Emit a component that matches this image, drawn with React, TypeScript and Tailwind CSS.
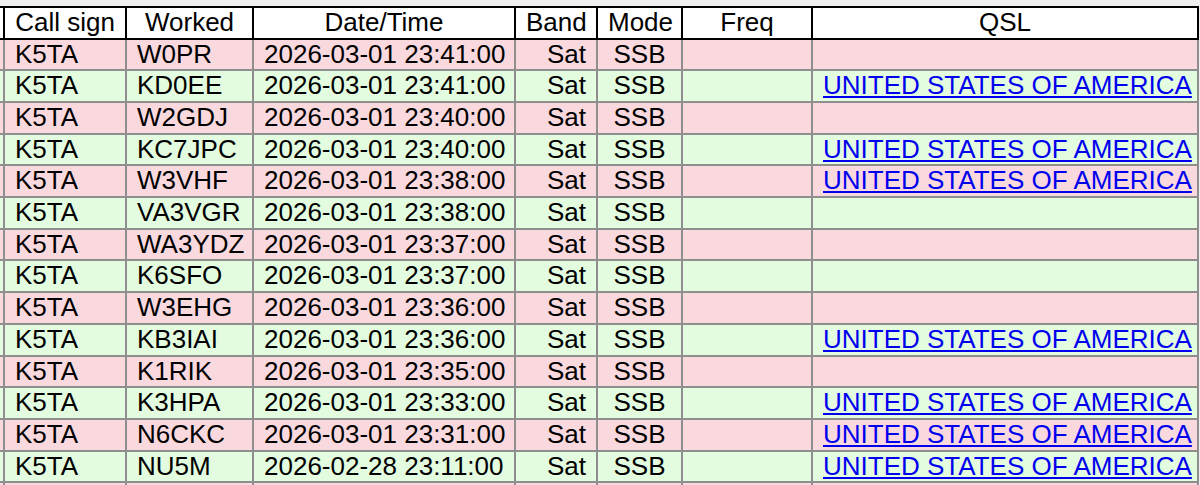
const rows: [string, string, string, boolean][] = [
  ['K5TA', 'W0PR', '2026-03-01 23:41:00', false],
  ['K5TA', 'KD0EE', '2026-03-01 23:41:00', true],
  ['K5TA', 'W2GDJ', '2026-03-01 23:40:00', false],
  ['K5TA', 'KC7JPC', '2026-03-01 23:40:00', true],
  ['K5TA', 'W3VHF', '2026-03-01 23:38:00', true],
  ['K5TA', 'VA3VGR', '2026-03-01 23:38:00', false],
  ['K5TA', 'WA3YDZ', '2026-03-01 23:37:00', false],
  ['K5TA', 'K6SFO', '2026-03-01 23:37:00', false],
  ['K5TA', 'W3EHG', '2026-03-01 23:36:00', false],
  ['K5TA', 'KB3IAI', '2026-03-01 23:36:00', true],
  ['K5TA', 'K1RIK', '2026-03-01 23:35:00', false],
  ['K5TA', 'K3HPA', '2026-03-01 23:33:00', true],
  ['K5TA', 'N6CKC', '2026-03-01 23:31:00', true],
  ['K5TA', 'NU5M', '2026-02-28 23:11:00', true],
];

const th = 'border-2 border-black bg-white px-[10px] py-0 text-center font-normal leading-[29.5px] whitespace-nowrap';
const td = 'border-2 border-[#8e8e8e] px-[10px] py-0 leading-[29.7px] whitespace-nowrap';

export default function App() {
  return (
    <div
      className="h-[485px] w-[1200px] overflow-hidden bg-[#efefef] pt-[6px] text-[26px] text-black"
      style={{ fontFamily: '"Liberation Sans", Arial, sans-serif' }}
    >
      <table className="ml-[-17px] w-[1214px] table-fixed border-collapse">
        <colgroup>
          <col className="w-[20px]" />
          <col className="w-[122px]" />
          <col className="w-[127px]" />
          <col className="w-[262px]" />
          <col className="w-[82px]" />
          <col className="w-[85px]" />
          <col className="w-[130px]" />
          <col className="w-[386px]" />
        </colgroup>
        <thead>
          <tr>
            <th className="border-2 border-black bg-white p-0"></th>
            <th className={th}>Call sign</th>
            <th className={th}>Worked</th>
            <th className={th}>Date/Time</th>
            <th className={th}>Band</th>
            <th className={th}>Mode</th>
            <th className={th}>Freq</th>
            <th className={th}>QSL</th>
          </tr>
        </thead>
        <tbody>
          {rows.map(([call, worked, date, qsl], i) => (
            <tr key={i} className={i % 2 === 0 ? 'bg-[#fad9de]' : 'bg-[#e3fcdf]'}>
              <td className="border-2 border-[#8e8e8e] p-0"></td>
              <td className={td}>{call}</td>
              <td className={td}>{worked}</td>
              <td className={td}>{date}</td>
              <td className={`${td} text-right`}>Sat</td>
              <td className={`${td} text-center`}>SSB</td>
              <td className={td}></td>
              <td className={td}>
                {qsl && (
                  <a href="#" className="text-[#0000ee] underline">
                    UNITED STATES OF AMERICA
                  </a>
                )}
              </td>
            </tr>
          ))}
          <tr className="bg-[#fad9de]">
            <td className="border-2 border-[#8e8e8e] p-0"></td>
            <td className={td}>&nbsp;</td>
            <td className={td}></td>
            <td className={td}></td>
            <td className={td}></td>
            <td className={td}></td>
            <td className={td}></td>
            <td className={td}></td>
          </tr>
        </tbody>
      </table>
    </div>
  );
}
